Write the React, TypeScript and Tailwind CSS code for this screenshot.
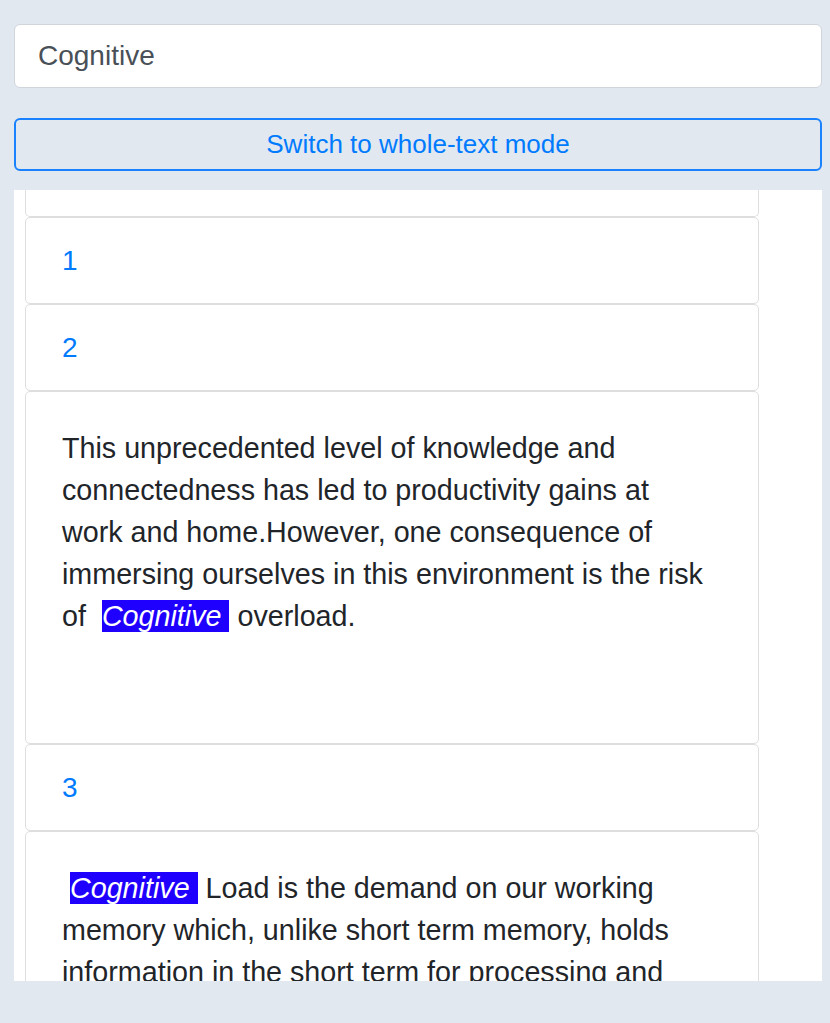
import React from 'react';

const font = { fontFamily: '"Liberation Sans", Arial, sans-serif' };

function Hl({ children }: { children: React.ReactNode }) {
  return <span className="bg-[#1f00ff] text-white italic">{children}</span>;
}

function NumCard({ n }: { n: number }) {
  return (
    <div className="border border-[#dedede] rounded-[5px] bg-white px-[36px] py-[21.5px] text-[28px] leading-[42px] text-[#007bff]">
      {n}
    </div>
  );
}

export default function App() {
  return (
    <div className="min-h-screen bg-[#e1e8ef] pt-6 px-[14px] pr-[8px]" style={font}>
      <div className="h-[64px] rounded-[6px] border border-[#cfd5db] bg-white flex items-center px-[23px] text-[28px] text-[#495057]">
        Cognitive
      </div>
      <button className="mt-[30px] w-full h-[53px] rounded-[6px] border-2 border-[#1a82ff] text-[26px] text-[#007bff] flex items-center justify-center">
        Switch to whole-text mode
      </button>
      <div className="mt-[19px] h-[791px] bg-white overflow-hidden">
        <div className="ml-[11px] w-[734px] text-[#212529]">
          <div className="h-[27px] border-x border-b border-[#dedede] rounded-b-[5px]" />
          <NumCard n={1} />
          <NumCard n={2} />
          <div className="border border-[#dedede] rounded-[5px] pl-[36px] pr-[46px] pt-[35px] pb-[106px] text-[28.7px] leading-[42px]">
            This unprecedented level of knowledge and connectedness has led to productivity gains at work and
            home.However, one consequence of immersing ourselves in this environment is the risk of{'\u00a0 '}
            <Hl>Cognitive{'\u00a0'}</Hl> overload.
          </div>
          <NumCard n={3} />
          <div className="border border-[#dedede] rounded-[5px] pl-[36px] pr-[46px] pt-[35px] pb-[106px] text-[28.7px] leading-[42px]">
            {'\u00a0'}
            <Hl>Cognitive{'\u00a0'}</Hl> Load is the demand on our working memory which, unlike short term memory,
            holds information in the short term for processing and manipulation. When the demand exceeds our
            capacity, performance suffers.
          </div>
        </div>
      </div>
    </div>
  );
}
